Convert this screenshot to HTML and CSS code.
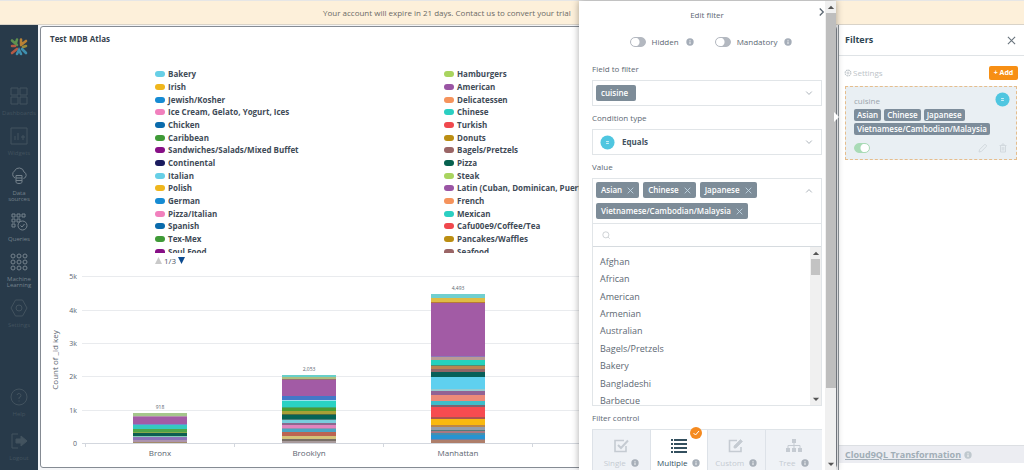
FILE: index.html
```html
<!DOCTYPE html>
<html lang="en">
<head>
<meta charset="utf-8">
<title>Test MDB Atlas</title>
<link rel="stylesheet" href="styles.css">
</head>
<body>
<svg width="0" height="0" class="defs" aria-hidden="true">
  <symbol id="info" viewBox="0 0 10 10"><circle cx="5" cy="5" r="4.6" fill="currentColor"/><path d="M5 4.4V7.6M5 2.4v1.1" stroke="#fff" stroke-width="1.1"/></symbol>
  <symbol id="down" viewBox="0 0 10 10"><path d="M1.5 3.2 5 6.8 8.5 3.2" fill="none" stroke="currentColor"/></symbol>
  <symbol id="close" viewBox="0 0 10 10"><path d="M1 1 9 9M9 1 1 9" fill="none" stroke="currentColor" stroke-width="1.2"/></symbol>
  <symbol id="equals" viewBox="0 0 16 16"><circle cx="8" cy="8" r="7.5" fill="#4fc6e0"/><path d="M6.500 7h3M6.500 9h3" stroke="#d8f3fa"/></symbol>
</svg>

<header class="banner">Your account will expire in 21 days. Contact us to convert your trial</header>

<div class="app">
  <nav class="sidebar">
    <svg class="logo" viewBox="0 0 20 20" fill="none" stroke-width="2.6" stroke-linecap="round">
      <path d="M3 3.5 8 8M8 2.5 7 6" stroke="#5e9150"/><path d="M12 2.5 12 7M17 4 12 8" stroke="#b98135"/>
      <path d="M3 9h3M3 16 8 12" stroke="#b45a45"/><path d="M17 9l-3 1" stroke="#9a8a3b"/>
      <path d="M8 17 10 13l2 4M17 16l-4-4" stroke="#3f8fae"/>
    </svg>
    <a class="nav-item dim" href="#"><svg viewBox="0 0 18 18"><path d="M1 1h7v7H1zM10 1h7v7h-7zM1 10h7v7H1zM10 10h7v7h-7z"/></svg><span>Dashboards</span></a>
    <a class="nav-item dim" href="#"><svg viewBox="0 0 18 18"><path d="M1 1h16v16H1zM5 13V9M8 13V6M13 13V8M11 10h4"/></svg><span>Widgets</span></a>
    <a class="nav-item" href="#"><svg viewBox="0 0 18 18"><path d="M5 11a4 4 0 0 1-.5-7A5 5 0 0 1 14 5a3.4 3.4 0 0 1-.5 6.500M6 8.500h6v6.500c0 1-1.300 1.500-3 1.500s-3-.500-3-1.500zM6 11h6M6 13.500h6"/></svg><span>Data<br>sources</span></a>
    <a class="nav-item" href="#"><svg viewBox="0 0 18 18"><path d="M2 1h3v3H2zM7 1h3v3H7zM12 1h3v3h-3zM2 6h3v3H2zM7 6h3v3H7zM2 11h3v3H2z"/><circle cx="12.500" cy="12.500" r="4.500"/><path d="m10.500 12.500 1.500 1.500 2.500-3"/></svg><span>Queries</span></a>
    <a class="nav-item" href="#"><svg viewBox="0 0 18 18"><circle cx="3" cy="3" r="2"/><circle cx="9" cy="3" r="2"/><circle cx="15" cy="3" r="2"/><circle cx="3" cy="9" r="2"/><circle cx="9" cy="9" r="2"/><circle cx="15" cy="9" r="2"/><circle cx="3" cy="15" r="2"/><circle cx="9" cy="15" r="2"/><circle cx="15" cy="15" r="2"/></svg><span>Machine<br>Learning</span></a>
    <a class="nav-item dim" href="#"><svg viewBox="0 0 18 18"><path d="M5.500 1h7L17 9l-4.500 8h-7L1 9z"/><circle cx="9" cy="9" r="3"/></svg><span>Settings</span></a>
    <a class="nav-item dim help" href="#"><svg viewBox="0 0 18 18"><circle cx="9" cy="9" r="8"/><path d="M7 7a2 2 0 1 1 2 2.500V11M9 12.500v1"/></svg><span>Help</span></a>
    <a class="nav-item dim" href="#"><svg viewBox="0 0 18 18"><path d="M8 2H2v14h6"/><path d="M6 7h5V4l6 5-6 5v-3H6z" fill="currentColor"/></svg><span>Logout</span></a>
  </nav>

  <main class="widget">
    <h1 class="widget-title">Test MDB Atlas</h1>
    <div class="legend">
      <ul class="legend-col">
        <li><i class="c-sky"></i>Bakery</li><li><i class="c-gold"></i>Irish</li><li><i class="c-blue"></i>Jewish/Kosher</li><li><i class="c-pink"></i>Ice Cream, Gelato, Yogurt, Ices</li><li><i class="c-navy"></i>Chicken</li><li><i class="c-green"></i>Caribbean</li><li><i class="c-purple"></i>Sandwiches/Salads/Mixed Buffet</li><li><i class="c-ink"></i>Continental</li><li><i class="c-sky"></i>Italian</li><li><i class="c-gold"></i>Polish</li><li><i class="c-blue"></i>German</li><li><i class="c-pink"></i>Pizza/Italian</li><li><i class="c-navy"></i>Spanish</li><li><i class="c-green"></i>Tex-Mex</li><li><i class="c-purple"></i>Soul Food</li>
      </ul>
      <ul class="legend-col">
        <li><i class="c-lime"></i>Hamburgers</li><li><i class="c-violet"></i>American</li><li><i class="c-orange"></i>Delicatessen</li><li><i class="c-teal"></i>Chinese</li><li><i class="c-red"></i>Turkish</li><li><i class="c-mustard"></i>Donuts</li><li><i class="c-brown"></i>Bagels/Pretzels</li><li><i class="c-forest"></i>Pizza</li><li><i class="c-lime"></i>Steak</li><li><i class="c-violet"></i>Latin (Cuban, Dominican, Puerto Rican)</li><li><i class="c-orange"></i>French</li><li><i class="c-teal"></i>Mexican</li><li><i class="c-red"></i>Cafu00e9/Coffee/Tea</li><li><i class="c-mustard"></i>Pancakes/Waffles</li><li><i class="c-brown"></i>Seafood</li>
      </ul>
    </div>
    <div class="pager">
      <svg viewBox="0 0 8 8"><path d="M4 0 8 8H0z" fill="#c9c9c9"/></svg><span>1/3</span><svg viewBox="0 0 8 8"><path d="M0 0h8L4 8z" fill="#0b4a8f"/></svg>
    </div>
    <svg class="plot" viewBox="41 268 784 198" width="784" height="198" role="img" aria-label="Count of _id key by borough">
      <g stroke="#e9ebee"><path d="M82 276.500H825M82 310.500H825M82 343.500H825M82 376.500H825M82 410.500H825"/><path d="M82 443.500H825M85.500 443v4M234.500 443v4M383.500 443v4M532.500 443v4" stroke="#d3d7de"/></g>
      <g class="tick" text-anchor="end"><text x="77" y="279">5k</text><text x="77" y="313">4k</text><text x="77" y="346">3k</text><text x="77" y="379">2k</text><text x="77" y="413">1k</text><text x="77" y="446">0</text></g>
      <text class="axis" text-anchor="middle" transform="translate(58 360) rotate(-90)">Count of _id key</text>
      <g class="cat" text-anchor="middle"><text x="160" y="456">Bronx</text><text x="309" y="456">Brooklyn</text><text x="458" y="456">Manhattan</text></g>
      <g class="total" text-anchor="middle"><text x="160" y="409">918</text><text x="309" y="371">2,053</text><text x="458" y="290">4,493</text></g>
      <g shape-rendering="crispEdges">
        <g transform="translate(133 0)">
          <rect width="54" height="3" y="413" fill="#a5c68c"/><rect width="54" height="1" y="416" fill="#b58db0"/><rect width="54" height="7" y="417" fill="#a25ba5"/><rect width="54" height="1" y="424" fill="#6d8fd0"/><rect width="54" height="4" y="425" fill="#35c9c0"/><rect width="54" height="3" y="429" fill="#4ea648"/><rect width="54" height="1" y="432" fill="#87aa4a"/><rect width="54" height="3" y="433" fill="#0c5f50"/><rect width="54" height="1" y="436" fill="#85cdb7"/><rect width="54" height="3" y="437" fill="#8b74b8"/><rect width="54" height="2" y="440" fill="#ac93ae"/><rect width="54" height="1" y="442" fill="#a28b6b"/>
        </g>
        <g transform="translate(282 0)">
          <rect width="54" height="2" y="375" fill="#68cfc8"/><rect width="54" height="2" y="377" fill="#aebd80"/><rect width="54" height="1" y="379" fill="#9a6e75"/><rect width="54" height="16" y="380" fill="#a25ba5"/><rect width="54" height="4" y="396" fill="#4378c8"/><rect width="54" height="1" y="400" fill="#9ae3ef"/><rect width="54" height="6" y="401" fill="#2ad2c3"/><rect width="54" height="1" y="407" fill="#43a878"/><rect width="54" height="3" y="408" fill="#4a9c32"/><rect width="54" height="3" y="411" fill="#a7a036"/><rect width="54" height="1" y="414" fill="#536b40"/><rect width="54" height="4" y="415" fill="#066456"/><rect width="54" height="1" y="419" fill="#477f7c"/><rect width="54" height="3" y="420" fill="#79cddd"/><rect width="54" height="2" y="423" fill="#8b688e"/><rect width="54" height="3" y="425" fill="#e184be"/><rect width="54" height="1" y="428" fill="#9990b0"/><rect width="54" height="3" y="429" fill="#4aa5c4"/><rect width="54" height="4" y="432" fill="#bb6452"/><rect width="54" height="3" y="436" fill="#d3c278"/><rect width="54" height="2" y="439" fill="#786e66"/><rect width="54" height="2" y="441" fill="#a79a9b"/>
        </g>
        <g transform="translate(431 0)">
          <rect width="54" height="4" y="294" fill="#70cfcf"/><rect width="54" height="4" y="298" fill="#dfbc45"/><rect width="54" height="1" y="302" fill="#b87a36"/><rect width="54" height="53" y="303" fill="#a25ba5"/><rect width="54" height="1" y="356" fill="#8b78ba"/><rect width="54" height="3" y="357" fill="#b99b95"/><rect width="54" height="5" y="360" fill="#25d2bd"/><rect width="54" height="1" y="365" fill="#548c6e"/><rect width="54" height="3" y="366" fill="#b98550"/><rect width="54" height="3" y="369" fill="#906568"/><rect width="54" height="5" y="372" fill="#075f59"/><rect width="54" height="12" y="377" fill="#5fd0ef"/><rect width="54" height="2" y="389" fill="#97cbd0"/><rect width="54" height="4" y="391" fill="#926294"/><rect width="54" height="6" y="395" fill="#ec8a79"/><rect width="54" height="4" y="401" fill="#3ebdca"/><rect width="54" height="2" y="405" fill="#7b6470"/><rect width="54" height="10" y="407" fill="#f64b50"/><rect width="54" height="2" y="417" fill="#ab5350"/><rect width="54" height="6" y="419" fill="#f9b910"/><rect width="54" height="2" y="425" fill="#bd8747"/><rect width="54" height="3" y="427" fill="#949eac"/><rect width="54" height="1" y="430" fill="#517c7c"/><rect width="54" height="2" y="431" fill="#a97882"/><rect width="54" height="2" y="433" fill="#468eae"/><rect width="54" height="4" y="435" fill="#2693d2"/><rect width="54" height="1" y="439" fill="#6f80a4"/><rect width="54" height="3" y="440" fill="#ae7e6a"/>
        </g>
      </g>
    </svg>
  </main>

  <aside class="filters">
    <div class="filters-head"><h2>Filters</h2><button class="icon-btn" aria-label="Close filters"><svg viewBox="0 0 10 10"><use href="#close"/></svg></button></div>
    <div class="filters-bar">
      <button class="settings"><svg viewBox="0 0 10 10" fill="none" stroke="currentColor"><circle cx="5" cy="5" r="3.600" stroke-width="1.400" stroke-dasharray="2 .8"/><circle cx="5" cy="5" r="1.300"/></svg>Settings</button>
      <button class="add">+ Add</button>
    </div>
    <section class="card">
      <div class="card-name">cuisine</div>
      <svg class="card-op" viewBox="0 0 16 16"><use href="#equals"/></svg>
      <div class="card-tags"><span>Asian</span><span>Chinese</span><span>Japanese</span><span>Vietnamese/Cambodian/Malaysia</span></div>
      <div class="card-foot">
        <input class="toggle on" type="checkbox" checked aria-label="Enable cuisine filter">
        <button class="ghost" aria-label="Edit"><svg viewBox="0 0 10 10" fill="none" stroke="currentColor"><path d="m1 9 .6-2.400L7 1.200 8.800 3 3.400 8.400z"/></svg></button>
        <button class="ghost" aria-label="Delete"><svg viewBox="0 0 10 10" fill="none" stroke="currentColor"><path d="M1.500 2.500h7M4 2.500V1h2v1.500M2.500 2.500V9h5V2.500M4.200 4v3.500M5.800 4v3.500"/></svg></button>
      </div>
    </section>
    <footer class="filters-foot"><a href="#">Cloud9QL Transformation</a><svg viewBox="0 0 10 10"><use href="#info"/></svg></footer>
  </aside>
</div>

<div class="drawer" role="dialog" aria-labelledby="drawer-title">
  <form class="drawer-body">
    <div class="drawer-head"><h2 id="drawer-title">Edit filter</h2><button type="button" class="collapse" aria-label="Collapse"><svg viewBox="0 0 8 10"><path d="m2 1 4 4-4 4" fill="none" stroke="currentColor" stroke-width="1.500"/></svg></button></div>
    <div class="switches">
      <label><input class="toggle" type="checkbox">Hidden<svg viewBox="0 0 10 10"><use href="#info"/></svg></label>
      <label><input class="toggle" type="checkbox">Mandatory<svg viewBox="0 0 10 10"><use href="#info"/></svg></label>
    </div>
    <div class="label" id="l-field">Field to filter</div>
    <button type="button" class="box" aria-labelledby="l-field"><span class="tag">cuisine</span><svg class="chev" viewBox="0 0 10 10"><use href="#down"/></svg></button>
    <div class="label" id="l-cond">Condition type</div>
    <button type="button" class="box" aria-labelledby="l-cond"><svg class="op" viewBox="0 0 16 16"><use href="#equals"/></svg><b>Equals</b><svg class="chev" viewBox="0 0 10 10"><use href="#down"/></svg></button>
    <div class="label" id="l-value">Value</div>
    <div class="multi" role="group" aria-labelledby="l-value">
      <div class="multi-tags">
        <div class="tags">
          <span class="tag">Asian<button type="button" aria-label="Remove Asian"><svg viewBox="0 0 10 10"><use href="#close"/></svg></button></span>
          <span class="tag">Chinese<button type="button" aria-label="Remove Chinese"><svg viewBox="0 0 10 10"><use href="#close"/></svg></button></span>
          <span class="tag">Japanese<button type="button" aria-label="Remove Japanese"><svg viewBox="0 0 10 10"><use href="#close"/></svg></button></span>
          <span class="tag">Vietnamese/Cambodian/Malaysia<button type="button" aria-label="Remove Vietnamese/Cambodian/Malaysia"><svg viewBox="0 0 10 10"><use href="#close"/></svg></button></span>
        </div>
        <svg class="chev up" viewBox="0 0 10 10"><use href="#down"/></svg>
      </div>
      <div class="search"><svg viewBox="0 0 10 10" fill="none" stroke="#c3c8cc"><circle cx="4.800" cy="4.800" r="3.800"/><path d="m7.600 7.600 2 2"/></svg><input type="text" aria-label="Search values"></div>
      <div class="options">
        <ul role="listbox" aria-labelledby="l-value"><li role="option">Afghan</li><li role="option">African</li><li role="option">American</li><li role="option">Armenian</li><li role="option">Australian</li><li role="option">Bagels/Pretzels</li><li role="option">Bakery</li><li role="option">Bangladeshi</li><li role="option">Barbecue</li></ul>
        <div class="scroll"><svg viewBox="0 0 8 8"><path d="M1.500 5.500 4 3l2.500 2.500z"/></svg><i></i><svg viewBox="0 0 8 8"><path d="M1.500 3 4 5.500 6.500 3z"/></svg></div>
      </div>
    </div>
    <div class="label">Filter control</div>
    <div class="tabs">
      <button type="button"><svg viewBox="0 0 16 16" fill="none" stroke="currentColor" stroke-width="1.600"><path d="M13 8v5.500H2v-11h9"/><path d="m5 7 3 3 7-7.500" stroke-width="2"/></svg><span>Single<svg viewBox="0 0 10 10"><use href="#info"/></svg></span></button>
      <button type="button" class="active"><svg viewBox="0 0 16 16" fill="currentColor"><path d="M0 1h2v2H0zM3 1h13v2H3zM0 5h2v2H0zM3 5h13v2H3zM0 9h2v2H0zM3 9h13v2H3zM0 13h2v2H0zM3 13h13v2H3z"/></svg><span>Multiple<svg viewBox="0 0 10 10"><use href="#info"/></svg></span><svg class="check" viewBox="0 0 12 12"><circle cx="6" cy="6" r="6" fill="#f58a1f"/><path d="m3.500 6 2 2 3.500-4" fill="none" stroke="#fff"/></svg></button>
      <button type="button"><svg viewBox="0 0 16 16" fill="none" stroke="currentColor" stroke-width="1.600"><path d="M13 9v4.500H1.500v-11H9"/><path d="M6 10V8l6.500-6.500 2 2L8 10z" fill="currentColor" stroke-width=".8"/></svg><span>Custom<svg viewBox="0 0 10 10"><use href="#info"/></svg></span></button>
      <button type="button"><svg viewBox="0 0 16 16" fill="currentColor"><path d="M6 1h4v4H6zM0 10h4v4H0zM6 10h4v4H6zM12 10h4v4h-4z"/><path d="M8 5v5M2 10V7.500h12V10" fill="none" stroke="currentColor"/></svg><span>Tree<svg viewBox="0 0 10 10"><use href="#info"/></svg></span></button>
    </div>
  </form>
  <div class="scroll main-scroll"><svg viewBox="0 0 8 8"><path d="M1.500 5.500 4 3l2.500 2.500z"/></svg><i></i><svg viewBox="0 0 8 8"><path d="M1.500 3 4 5.500 6.500 3z"/></svg></div>
  <svg class="notch" viewBox="0 0 6 10"><path d="M0 0 5 5 0 10z" fill="#fff"/></svg>
</div>
</body>
</html>
```

FILE: styles.css
```css
* { box-sizing: border-box; }
body {
  margin: 0;
  height: 100vh;
  display: flex;
  flex-direction: column;
  overflow: hidden;
  position: relative;
  background: #f4f5f7;
  color: #4a5867;
  font: 8px/12px "Open Sans", "Noto Sans", sans-serif;
}
h1, h2, ul { margin: 0; padding: 0; }
ul { list-style: none; }
button, input { font: inherit; color: inherit; margin: 0; padding: 0; border: 0; background: none; }
button { cursor: pointer; }
svg { display: block; flex: none; }
.defs { position: absolute; }

.banner {
  flex: none;
  height: 25px;
  padding: 4px 0 0 323px;
  border-top: 1px solid #e6e6e6;
  border-bottom: 1px solid #d9d3c8;
  background: #fdf0da;
  color: #6b6a66;
  white-space: nowrap;
  overflow: hidden;
  line-height: 16px;
}
.app { flex: 1; display: flex; min-height: 0; }

.sidebar {
  flex: none;
  width: 38px;
  padding: 12px 0 9px;
  display: flex;
  flex-direction: column;
  align-items: center;
  gap: 11px;
  background: #283a4a;
}
.logo { width: 20px; height: 20px; margin-bottom: 19px; }
.nav-item {
  display: flex;
  flex-direction: column;
  align-items: center;
  gap: 5px;
  color: #75828c;
  text-align: center;
  text-decoration: none;
  font-size: 6px;
  line-height: 6px;
}
.nav-item svg { width: 18px; height: 18px; fill: none; stroke: currentColor; stroke-width: 1; }
.nav-item.dim { color: #43535f; }
.nav-item.help { margin-top: auto; margin-bottom: 4px; }

.widget {
  flex: 1;
  min-width: 0;
  margin: 1px 1px 2px 2px;
  border: 1px solid #858b93;
  border-radius: 3px;
  background: #fff;
  overflow: hidden;
  display: flex;
  flex-direction: column;
}
.widget-title { padding: 6px 0 0 9px; font-size: 8px; line-height: 12px; font-weight: 700; color: #36424e; }
.legend {
  flex: none;
  height: 185px;
  margin-top: 23px;
  padding-left: 114px;
  overflow: hidden;
  display: grid;
  grid-template-columns: 289px 300px;
}
.legend-col {
  height: 190px;
  display: grid;
  grid-auto-rows: 1fr;
  font-size: 8px;
  font-weight: 700;
  color: #3f4b57;
  white-space: nowrap;
}
.legend-col li { display: flex; align-items: center; gap: 3px; }
.legend-col i { width: 10px; height: 6px; border-radius: 3px; }
.c-sky { background: #67cfe6; } .c-gold { background: #efb61d; } .c-blue { background: #168bd3; }
.c-pink { background: #f180bd; } .c-navy { background: #0a6bac; } .c-green { background: #3f9a37; }
.c-purple { background: #870f86; } .c-ink { background: #1a1b5e; } .c-lime { background: #a9d45f; }
.c-violet { background: #9a55a4; } .c-orange { background: #f5935c; } .c-teal { background: #2bcfc2; }
.c-red { background: #f0484d; } .c-mustard { background: #bb8e12; } .c-brown { background: #9a6566; }
.c-forest { background: #07614f; }
.pager { display: flex; align-items: center; gap: 2px; height: 15px; padding-left: 114px; }
.pager svg { width: 7px; height: 7px; }
.plot { height: 198px; }
.plot text { fill: #5b6570; }
.plot .tick { font-size: 7px; }
.plot .axis { font-size: 8px; }
.plot .cat { font-size: 8px; }
.plot .total { font-size: 5px; }

.filters {
  flex: none;
  width: 186px;
  background: #fff;
  border-left: 1px solid #8f959b;
  display: flex;
  flex-direction: column;
}
.filters-head {
  height: 31px;
  padding: 0 8px 0 6px;
  display: flex;
  align-items: center;
  justify-content: space-between;
  border-bottom: 1px solid #dfe3e6;
}
.filters-head h2 { font-size: 9px; color: #2f4654; }
.icon-btn svg { width: 9px; height: 9px; color: #68737c; }
.filters-bar { display: flex; align-items: center; justify-content: space-between; padding: 10px 6px 6px 5px; }
.settings { display: flex; align-items: center; gap: 1px; color: #bcc3c8; }
.settings svg { width: 8px; height: 8px; }
.add { width: 29px; height: 14px; border-radius: 2px; background: #f78f14; color: #fff; font-size: 7px; line-height: 12px; font-weight: 700; }
.card {
  position: relative;
  margin: 0 7px 0 6px;
  padding: 8px 8px 2px;
  border: 1px dashed #e6bd8c;
  background: #e9eff3;
}
.card-name { color: #9aa5ad; line-height: 12px; margin-bottom: 2px; }
.card-op { position: absolute; top: 5px; right: 6px; width: 15px; height: 15px; }
.card-tags { display: flex; flex-wrap: wrap; gap: 2px 3px; }
.card-tags span { padding: 0 3px; border-radius: 2px; background: #7d8d9b; color: #fff; font-weight: 600; line-height: 12px; }
.card-foot { display: flex; align-items: center; gap: 10px; height: 18px; margin-top: 4px; color: #d2d9de; }
.card-foot .toggle { margin-right: auto; }
.ghost svg { width: 10px; height: 10px; }
.filters-foot {
  margin-top: auto;
  margin-bottom: 7px;
  height: 18px;
  padding-left: 6px;
  display: flex;
  align-items: center;
  gap: 3px;
  background: #ecedf2;
  border-top: 1px solid #dcdfe3;
  color: #bfc8ce;
}
.filters-foot a { color: #a1aeb7; font-size: 9px; font-weight: 700; }
.filters-foot svg { width: 8px; height: 8px; }

.toggle {
  appearance: none;
  flex: none;
  width: 16px;
  height: 10px;
  border-radius: 5px;
  border: 1px solid #b3b8c0;
  background: radial-gradient(circle at 4px 4px, #fff 4px, #b3b8c0 5px);
}
.toggle.on { border-color: #a9dbb6; background: radial-gradient(circle at 10px 4px, #fff 4px, #a9dbb6 5px); }

/* Slide-over editor above the dashboard and the filters column */
.drawer {
  position: absolute;
  top: 1px;
  bottom: 0;
  right: 188px;
  width: 257px;
  display: flex;
  background: #fff;
  box-shadow: 0 0 7px rgba(0, 0, 0, .35);
}
.drawer-body { flex: 1; min-width: 0; padding: 6px 3px 0 13px; overflow: hidden; display: flex; flex-direction: column; color: #5d6873; }
.drawer-head { position: relative; height: 16px; text-align: center; }
.drawer-head h2 { font-size: 8px; line-height: 16px; font-weight: 400; }
.collapse { position: absolute; right: -3px; top: 0; }
.collapse svg { width: 7px; height: 10px; }
.switches { display: flex; justify-content: center; gap: 21px; margin: 13px 0; padding-left: 8px; }
.switches label { display: flex; align-items: center; gap: 6px; line-height: 12px; }
.switches svg { width: 8px; height: 8px; margin-left: 1px; color: #a5adb8; }
.label { flex: none; padding-top: 2px; height: 19px; line-height: 12px; }
.box {
  flex: none;
  display: flex;
  align-items: center;
  width: 100%;
  height: 26px;
  margin-bottom: 4px;
  padding: 0 8px 0 3px;
  border: 1px solid #e1e5e8;
  text-align: left;
}
.chev { width: 8px; height: 8px; margin-left: auto; color: #98a1a9; }
.chev.up { transform: rotate(180deg); }
.op { width: 15px; height: 15px; margin: 0 7px 0 4px; }
.box b { color: #44525f; }
.tag {
  display: inline-flex;
  align-items: center;
  gap: 5px;
  height: 16px;
  padding: 0 5px;
  border-radius: 2px;
  background: #7d8c98;
  color: #fff;
  font-weight: 600;
}
.box .tag { padding-right: 8px; }
.tag svg { width: 7px; height: 7px; color: #c6dbe8; }
.multi { flex: none; border: 1px solid #e1e5e8; margin-bottom: 4px; }
.multi-tags { display: flex; padding: 3px 8px 4px 3px; align-items: flex-start; }
.multi-tags .chev { margin-top: 5px; }
.tags { flex: 1; display: flex; flex-wrap: wrap; gap: 5px 4px; }
.search { display: flex; align-items: center; gap: 6px; height: 24px; padding: 0 9px; border-top: 1px solid #e1e5e8; border-bottom: 1px solid #d6dbdf; }
.search svg { width: 8px; height: 8px; }
.search input { flex: 1; min-width: 0; outline: 0; }
.options { display: flex; height: 158px; overflow: hidden; font-size: 9px; }
.options ul { flex: 1; height: 163px; padding: 6px 0 0 7px; display: grid; grid-auto-rows: 1fr; align-items: center; }
.scroll { flex: none; width: 11px; display: flex; flex-direction: column; align-items: center; justify-content: space-between; background: #f0f0f0; }
.scroll svg { width: 10px; height: 12px; fill: #555; }
.scroll i { width: 9px; height: 16px; background: #c3c3c3; margin-bottom: auto; }
.main-scroll i { width: 10px; height: 80%; background: #bebebe; }
.tabs { flex: none; display: grid; grid-template-columns: repeat(4, 1fr); border-top: 1px solid #dfe4e8; }
.tabs button {
  position: relative;
  height: 41px;
  padding-top: 8px;
  display: flex;
  flex-direction: column;
  align-items: center;
  gap: 3px;
  background: #eff2f6;
  border-left: 1px solid #dde2e8;
  color: #c5cbd2;
}
.tabs button > svg { width: 16px; height: 16px; }
.tabs span { display: flex; align-items: center; gap: 5px; line-height: 12px; }
.tabs span svg { width: 8px; height: 8px; color: #a7afb8; }
.tabs .active { background: #fff; color: #34505f; border-bottom: 1px solid #f0a35e; }
.tabs .active .check { position: absolute; top: -3px; right: 5px; width: 12px; height: 12px; }
.notch { position: absolute; top: 111px; right: -4px; width: 6px; height: 10px; }
```
